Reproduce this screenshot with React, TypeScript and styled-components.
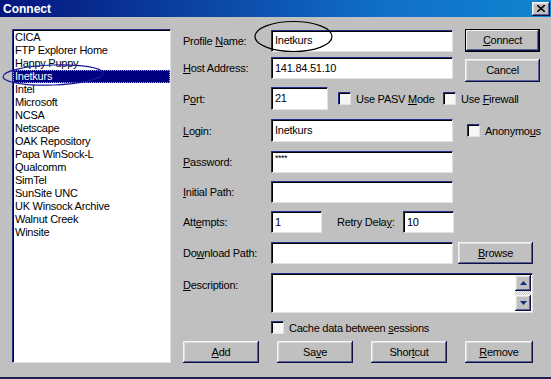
import styled, { createGlobalStyle, css } from 'styled-components';

const GlobalStyle = createGlobalStyle`
  html, body {
    margin: 0;
    padding: 0;
    background: #c0c0c0;
  }
  body {
    font-family: "Liberation Sans", Arial, sans-serif;
    font-size: 11px;
    letter-spacing: -0.25px;
    color: #000;
  }
`;

const sunken = css`
  box-sizing: border-box;
  border: 1px solid;
  border-color: #26308a #e2e2e2 #e2e2e2 #26308a;
  box-shadow: inset 1px 1px #000;
  background: #fff;
`;

const raised = css`
  box-sizing: border-box;
  background: #c0c0c0;
  box-shadow: inset -1px -1px #101040, inset 1px 1px #f4f4f4, inset -2px -2px #5a6098,
    inset 2px 2px #dedede;
`;

const profiles = [
  'CICA',
  'FTP Explorer Home',
  'Happy Puppy',
  'Inetkurs',
  'Intel',
  'Microsoft',
  'NCSA',
  'Netscape',
  'OAK Repository',
  'Papa WinSock-L',
  'Qualcomm',
  'SimTel',
  'SunSite UNC',
  'UK Winsock Archive',
  'Walnut Creek',
  'Winsite',
];

function App() {
  return (
    <>
      <GlobalStyle />
      <Window>
        <TitleBar>
          <TitleText>Connect</TitleText>
          <CloseButton>
            <svg width="8" height="7" viewBox="0 0 8 7">
              <path d="M0 0 L8 7 M8 0 L0 7" stroke="#000" strokeWidth="1.6" />
            </svg>
          </CloseButton>
        </TitleBar>
        <Body>
          <ListBox>
            {profiles.map((p) => (
              <ListItem key={p} $selected={p === 'Inetkurs'}>
                {p}
              </ListItem>
            ))}
          </ListBox>
          <Form>
            <Row $h={23} $mt={0}>
              <Label>
                Profile <U>N</U>ame:
              </Label>
              <Field $w={182}>Inetkurs</Field>
              <Button $w={75} $h={23} $ml={12} $default>
                <U>C</U>onnect
              </Button>
            </Row>
            <Row $h={22} $mt={5}>
              <Label>
                <U>H</U>ost Address:
              </Label>
              <Field $w={182}>141.84.51.10</Field>
              <Button $w={75} $h={23} $ml={12} $shift={4}>
                Cancel
              </Button>
            </Row>
            <Row $h={23} $mt={8}>
              <Label>
                P<U>o</U>rt:
              </Label>
              <Field $w={57} $h={23}>21</Field>
              <CheckItem $ml={10} $w={105}>
                <CheckBox />
                <span>
                  Use PASV <U>M</U>ode
                </span>
              </CheckItem>
              <CheckItem $ml={0}>
                <CheckBox />
                <span>
                  Use <U>F</U>irewall
                </span>
              </CheckItem>
            </Row>
            <Row $h={23} $mt={9}>
              <Label>
                <U>L</U>ogin:
              </Label>
              <Field $w={182} $h={23}>Inetkurs</Field>
              <CheckItem $ml={14}>
                <CheckBox />
                <span>
                  Anonymo<U>u</U>s
                </span>
              </CheckItem>
            </Row>
            <Row $h={22} $mt={9}>
              <Label>
                <U>P</U>assword:
              </Label>
              <Field $w={182} $top>
                <Stars>****</Stars>
              </Field>
            </Row>
            <Row $h={22} $mt={8}>
              <Label>
                <U>I</U>nitial Path:
              </Label>
              <Field $w={182} />
            </Row>
            <Row $h={22} $mt={8}>
              <Label>
                Att<U>e</U>mpts:
              </Label>
              <Field $w={51}>1</Field>
              <InlineLabel>
                Retry Dela<U>y</U>:
              </InlineLabel>
              <Field $w={51}>10</Field>
            </Row>
            <Row $h={22} $mt={9}>
              <Label>
                Do<U>w</U>nload Path:
              </Label>
              <Field $w={182} />
              <Button $w={75} $h={22} $ml={5}>
                <U>B</U>rowse
              </Button>
            </Row>
            <Row $h={40} $mt={9} $align="flex-start">
              <Label $pt={6}>
                <U>D</U>escription:
              </Label>
              <Memo>
                <MemoText />
                <ScrollBar>
                  <ScrollButton>
                    <svg width="7" height="4" viewBox="0 0 7 4">
                      <path d="M3.5 0 L7 4 L0 4 Z" fill="#1a2a80" />
                    </svg>
                  </ScrollButton>
                  <ScrollTrack />
                  <ScrollButton>
                    <svg width="7" height="4" viewBox="0 0 7 4">
                      <path d="M0 0 L7 0 L3.5 4 Z" fill="#1a2a80" />
                    </svg>
                  </ScrollButton>
                </ScrollBar>
              </Memo>
            </Row>
            <Row $h={13} $mt={8}>
              <Label />
              <CheckItem $ml={0}>
                <CheckBox />
                <span>
                  Cache data between <U>s</U>essions
                </span>
              </CheckItem>
            </Row>
            <ButtonRow>
              <Button $w={76} $h={22}>
                <U>A</U>dd
              </Button>
              <Button $w={76} $h={22}>
                Sa<U>v</U>e
              </Button>
              <Button $w={76} $h={22}>
                Shor<U>t</U>cut
              </Button>
              <Button $w={68} $h={22}>
                <U>R</U>emove
              </Button>
            </ButtonRow>
          </Form>
        </Body>
        <Marks width="551" height="379" viewBox="0 0 551 379">
          <ellipse cx="293.5" cy="36.5" rx="38.5" ry="15" fill="none" stroke="#000" strokeWidth="1.2" />
          <ellipse
            cx="53"
            cy="75"
            rx="50"
            ry="10"
            fill="none"
            stroke="#1a1a9a"
            strokeWidth="1.2"
            transform="rotate(-2 53 75)"
          />
        </Marks>
      </Window>
    </>
  );
}

export default App;

const Window = styled.div`
  position: relative;
  width: 551px;
  height: 379px;
  box-sizing: border-box;
  background: #c0c0c0;
  border-bottom: 2px solid #1c2050;
  display: flex;
  flex-direction: column;
  overflow: hidden;
`;

const TitleBar = styled.div`
  height: 17px;
  flex-shrink: 0;
  display: flex;
  align-items: center;
  justify-content: space-between;
  padding: 0 1px 0 3px;
  background: linear-gradient(to right, #05157e, #1070c8 70%, #1084d0);
`;

const TitleText = styled.span`
  color: #fff;
  font-weight: bold;
  font-size: 12px;
  letter-spacing: 0;
`;

const CloseButton = styled.div`
  ${raised};
  width: 18px;
  height: 14px;
  display: flex;
  align-items: center;
  justify-content: center;
`;

const Body = styled.div`
  display: flex;
  padding: 12px 0 0 12px;
`;

const ListBox = styled.div`
  ${sunken};
  width: 159px;
  height: 334px;
  flex-shrink: 0;
  padding: 1px 0;
  overflow: hidden;
`;

const ListItem = styled.div<{ $selected?: boolean }>`
  height: 13px;
  line-height: 13px;
  padding-left: 2px;
  white-space: nowrap;
  ${(p) =>
    p.$selected &&
    css`
      background: #000080;
      color: #fff;
      outline: 1px dotted #9aa0d8;
      outline-offset: -1px;
    `}
`;

const Form = styled.div`
  margin-left: 12px;
  width: 357px;
  display: flex;
  flex-direction: column;
`;

const Row = styled.div<{ $h: number; $mt: number; $align?: string }>`
  display: flex;
  align-items: ${(p) => p.$align ?? 'center'};
  height: ${(p) => p.$h}px;
  margin-top: ${(p) => p.$mt}px;
  flex-shrink: 0;
`;

const Label = styled.div<{ $pt?: number }>`
  width: 88px;
  flex-shrink: 0;
  white-space: nowrap;
  padding-top: ${(p) => p.$pt ?? 0}px;
`;

const InlineLabel = styled.div`
  width: 66px;
  margin-left: 15px;
  white-space: nowrap;
`;

const U = styled.span`
  text-decoration: underline;
  text-underline-offset: 1px;
`;

const Field = styled.div<{ $w: number; $h?: number; $top?: boolean }>`
  ${sunken};
  width: ${(p) => p.$w}px;
  height: ${(p) => p.$h ?? 22}px;
  flex-shrink: 0;
  display: flex;
  align-items: ${(p) => (p.$top ? 'flex-start' : 'center')};
  padding: ${(p) => (p.$top ? '2px 0 0 3px' : '0 0 1px 3px')};
  white-space: nowrap;
`;

const Stars = styled.span`
  font-size: 9px;
  line-height: 9px;
  letter-spacing: -0.5px;
`;

const Button = styled.div<{ $w: number; $h: number; $ml?: number; $shift?: number; $default?: boolean }>`
  ${raised};
  width: ${(p) => p.$w}px;
  height: ${(p) => p.$h}px;
  margin-left: ${(p) => p.$ml ?? 0}px;
  margin-top: ${(p) => p.$shift ?? 0}px;
  flex-shrink: 0;
  display: flex;
  align-items: center;
  justify-content: center;
  padding-bottom: 1px;
  ${(p) =>
    p.$default &&
    css`
      border: 1px solid #000;
      box-shadow: inset -1px -1px #101040, inset 1px 1px #f4f4f4, inset -2px -2px #5a6098;
    `}
`;

const CheckItem = styled.div<{ $ml: number; $w?: number }>`
  display: flex;
  align-items: center;
  gap: 5px;
  margin-left: ${(p) => p.$ml}px;
  width: ${(p) => (p.$w ? `${p.$w}px` : 'auto')};
  flex-shrink: 0;
  white-space: nowrap;
`;

const CheckBox = styled.div`
  ${sunken};
  width: 13px;
  height: 13px;
  flex-shrink: 0;
  background: #f6f6f6;
`;

const Memo = styled.div`
  ${sunken};
  width: 262px;
  height: 40px;
  display: flex;
  padding: 1px;
`;

const MemoText = styled.div`
  flex: 1;
`;

const ScrollBar = styled.div`
  width: 16px;
  display: flex;
  flex-direction: column;
`;

const ScrollButton = styled.div`
  ${raised};
  width: 16px;
  height: 16px;
  flex-shrink: 0;
  display: flex;
  align-items: center;
  justify-content: center;
`;

const ScrollTrack = styled.div`
  flex: 1;
  background: repeating-conic-gradient(#c0c0c0 0 25%, #fff 0 50%) 0 0 / 2px 2px;
`;

const ButtonRow = styled.div`
  display: flex;
  justify-content: space-between;
  width: 350px;
  margin-top: 7px;
`;

const Marks = styled.svg`
  position: absolute;
  top: 0;
  left: 0;
  pointer-events: none;
`;
